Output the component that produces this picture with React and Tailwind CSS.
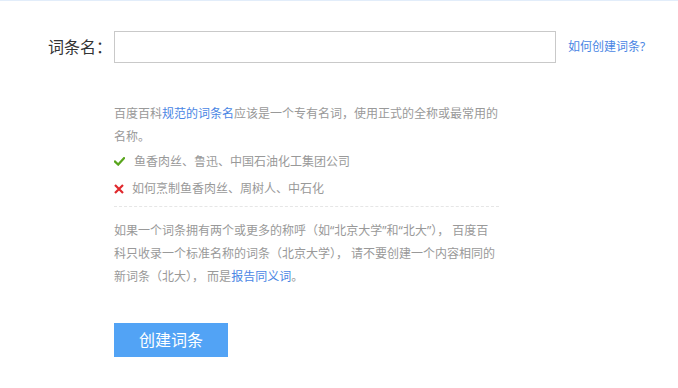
import React, { useState } from 'react';

const font = { fontFamily: '"Noto Sans", "Noto Sans CJK SC", sans-serif' };

function CheckMark() {
	return (
		<svg className="w-[11px] h-[9px] mr-[9px] shrink-0" viewBox="0 0 11 9" fill="none">
			<path d="M1 4.6 L4.2 7.6 L10 1.2" stroke="#58a51c" strokeWidth="2.2" strokeLinecap="square" />
		</svg>
	)
}

function CrossMark() {
	return (
		<svg className="w-[10px] h-[10px] mr-[8px] shrink-0" viewBox="0 0 10 10" fill="none">
			<path d="M1 1 L9 9 M9 1 L1 9" stroke="#e0282c" strokeWidth="2.2" />
		</svg>
	)
}

export default function App() {
	const [ name, setName ] = useState('');

	return (
		<div className="w-[678px] h-[388px] bg-white border-t border-[#e2edfa] overflow-hidden" style={font}>
			<div className="flex items-center pt-[30px]">
				<label className="w-[114px] pl-[48px] text-[16px] text-[#333] leading-[32px]">词条名：</label>
				<input
					className="w-[442px] h-[32px] border border-[#c9c9c9] px-2 text-[14px] text-[#333] focus:outline-none"
					value={name}
					onChange={(e) => setName(e.target.value)}
				/>
				<a className="ml-[12px] text-[12px] text-[#4a86e4] cursor-pointer">如何创建词条?</a>
			</div>

			<div className="ml-[114px] mt-[39px] w-[400px] text-[12px] text-[#999] leading-[23px]">
				<p className="w-[390px]">
					百度百科<a className="text-[#4a86e4]">规范的词条名</a>应该是一个专有名词，使用正式的全称或最常用的名称。
				</p>
				<ul className="border-b border-dashed border-[#e6e6e6] w-[385px] pb-[4px]">
					<li className="flex items-center h-[27px]"><CheckMark />鱼香肉丝、鲁迅、中国石油化工集团公司</li>
					<li className="flex items-center h-[27px]"><CrossMark />如何烹制鱼香肉丝、周树人、中石化</li>
				</ul>
				<p className="mt-[12px] whitespace-nowrap">
					如果一个词条拥有两个或更多的称呼（如“北京大学”和“北大”）， 百度百<br />
					科只收录一个标准名称的词条（北京大学）， 请不要创建一个内容相同的<br />
					新词条（北大）， 而是<a className="text-[#4a86e4]">报告同义词</a>。
				</p>
				<button className="mt-[35px] w-[114px] h-[34px] bg-[#52a3f5] text-white text-[16px]">创建词条</button>
			</div>
		</div>
	)
}
